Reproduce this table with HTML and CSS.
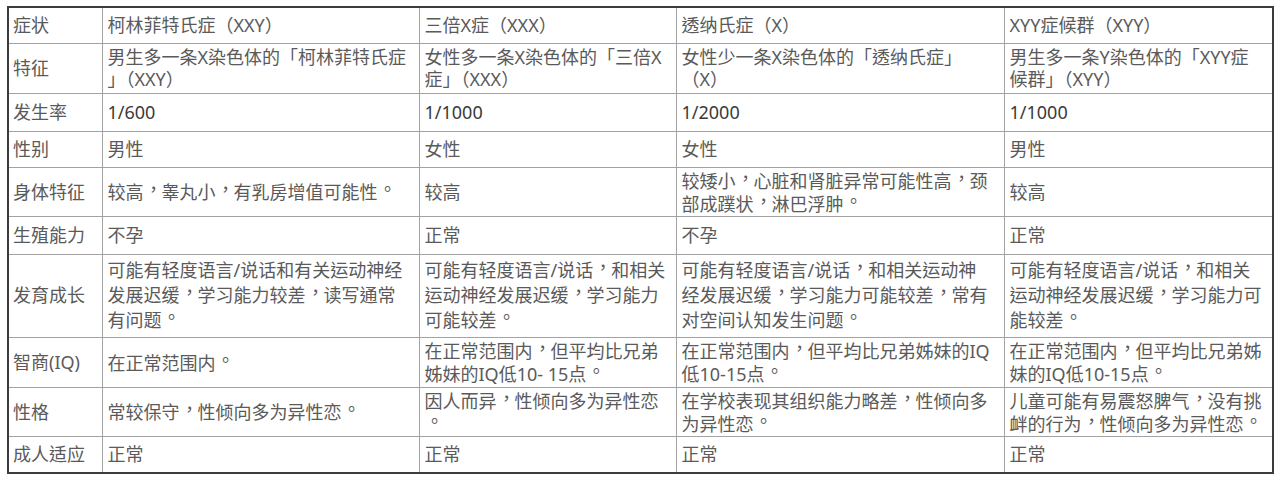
FILE: index.html
```html
<!DOCTYPE html>
<html lang="zh-TW">
<head>
<meta charset="utf-8">
<title>性染色体异常比较</title>
<link rel="stylesheet" href="styles.css">
</head>
<body>
<table class="grid">
  <colgroup>
    <col class="c1"><col class="c2"><col class="c3"><col class="c4"><col class="c5">
  </colgroup>
  <tbody>
    <tr class="r-head">
      <td>症状</td><td>柯林菲特氏症（XXY）</td><td>三倍X症（XXX）</td><td>透纳氏症（X）</td><td>XYY症候群（XYY）</td>
    </tr>
    <tr class="r-feat">
      <td>特征</td>
      <td>男生多一条X染色体的「柯林菲特氏症<br>」（XXY）</td>
      <td>女性多一条X染色体的「三倍X<br>症」（XXX）</td>
      <td>女性少一条X染色体的「透纳氏症」<br>（X）</td>
      <td>男生多一条Y染色体的「XYY症<br>候群」（XYY）</td>
    </tr>
    <tr class="r-rate">
      <td>发生率</td><td class="num">1/600</td><td class="num">1/1000</td><td class="num">1/2000</td><td class="num">1/1000</td>
    </tr>
    <tr class="r-sex">
      <td>性别</td><td>男性</td><td>女性</td><td>女性</td><td>男性</td>
    </tr>
    <tr class="r-body">
      <td>身体特征</td>
      <td>较高<span class="p">，</span>睾丸小<span class="p">，</span>有乳房增值可能性<span class="p">。</span></td>
      <td>较高</td>
      <td>较矮小<span class="p">，</span>心脏和肾脏异常可能性高<span class="p">，</span>颈<br>部成蹼状<span class="p">，</span>淋巴浮肿<span class="p">。</span></td>
      <td>较高</td>
    </tr>
    <tr class="r-fert">
      <td>生殖能力</td><td>不孕</td><td>正常</td><td>不孕</td><td>正常</td>
    </tr>
    <tr class="r-grow">
      <td>发育成长</td>
      <td>可能有轻度语言/说话和有关运动神经<br>发展迟缓<span class="p">，</span>学习能力较差<span class="p">，</span>读写通常<br>有问题<span class="p">。</span></td>
      <td>可能有轻度语言/说话<span class="p">，</span>和相关<br>运动神经发展迟缓<span class="p">，</span>学习能力<br>可能较差<span class="p">。</span></td>
      <td>可能有轻度语言/说话<span class="p">，</span>和相关运动神<br>经发展迟缓<span class="p">，</span>学习能力可能较差<span class="p">，</span>常有<br>对空间认知发生问题<span class="p">。</span></td>
      <td>可能有轻度语言/说话<span class="p">，</span>和相关<br>运动神经发展迟缓<span class="p">，</span>学习能力可<br>能较差<span class="p">。</span></td>
    </tr>
    <tr class="r-iq">
      <td>智商(IQ)</td>
      <td>在正常范围内<span class="p">。</span></td>
      <td>在正常范围内<span class="p">，</span>但平均比兄弟<br>姊妹的IQ低10- 15点<span class="p">。</span></td>
      <td>在正常范围内<span class="p">，</span>但平均比兄弟姊妹的IQ<br>低10-15点<span class="p">。</span></td>
      <td>在正常范围内<span class="p">，</span>但平均比兄弟姊<br>妹的IQ低10-15点<span class="p">。</span></td>
    </tr>
    <tr class="r-pers">
      <td>性格</td>
      <td>常较保守<span class="p">，</span>性倾向多为异性恋<span class="p">。</span></td>
      <td>因人而异<span class="p">，</span>性倾向多为异性恋<br><span class="p">。</span></td>
      <td>在学校表现其组织能力略差<span class="p">，</span>性倾向多<br>为异性恋<span class="p">。</span></td>
      <td>儿童可能有易震怒脾气<span class="p">，</span>没有挑<br>衅的行为<span class="p">，</span>性倾向多为异性恋<span class="p">。</span></td>
    </tr>
    <tr class="r-adult">
      <td>成人适应</td><td>正常</td><td>正常</td><td>正常</td><td>正常</td>
    </tr>
  </tbody>
</table>
</body>
</html>
```

FILE: styles.css
```css
html, body {
  margin: 0;
  padding: 0;
  background: #ffffff;
}

body {
  padding: 6px 0 0 7px;
  font-family: "Noto Sans", "Noto Sans CJK TC", sans-serif;
  font-size: 18px;
  color: #5a5a5a;
}

.grid {
  border-collapse: collapse;
  table-layout: fixed;
  width: 1265px;
  border: 2px solid #3c3c3c;
}

.c1 { width: 94px; }
.c2 { width: 317px; }
.c3 { width: 257px; }
.c4 { width: 328px; }
.c5 { width: 269px; }

.grid td {
  border: 1px solid #a3a3a3;
  padding: 0 4px 0 5px;
  vertical-align: middle;
  white-space: nowrap;
  line-height: 22px;
  overflow: hidden;
}

.grid td:first-child {
  padding-left: 4px;
}

/* Taiwan-style centred full-width punctuation */
.p {
  display: inline-block;
  box-sizing: border-box;
  width: 1em;
  padding-left: 0.05em;
  line-height: 1;
  vertical-align: 0.16em;
  overflow: visible;
}

.num {
  color: #3a3a3a;
}

.r-head { height: 36px; }
.r-feat { height: 50px; }
.r-rate { height: 38px; }
.r-sex { height: 36px; }
.r-body { height: 49px; }
.r-fert { height: 38px; }
.r-grow { height: 83px; }
.r-grow td { line-height: 25px; }
.r-iq { height: 50px; }
.r-pers { height: 49px; }
.r-adult { height: 37px; }
```
